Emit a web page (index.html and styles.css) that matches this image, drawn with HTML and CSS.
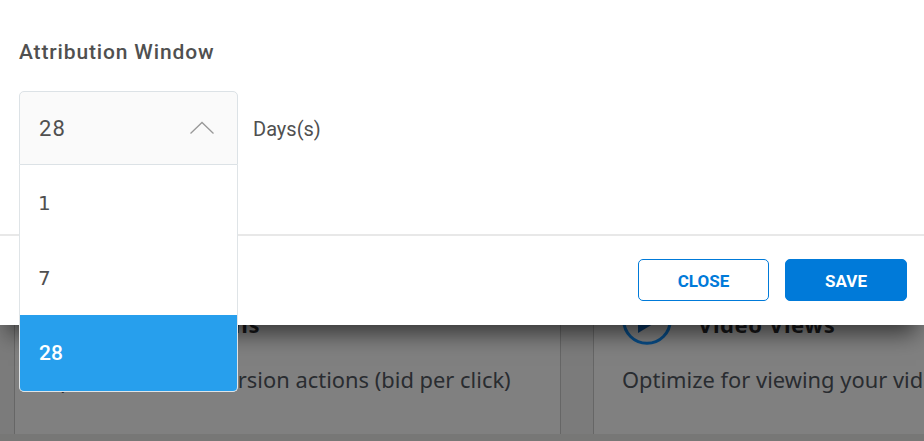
FILE: index.html
```
<!DOCTYPE html>
<html lang="en">
<head>
    <meta charset="UTF-8">
    <meta name="viewport" content="width=device-width, initial-scale=1.0">
    <title>Attribution Window</title>
    <link rel="stylesheet" href="styles.css">
</head>
<body>
    <main class="objectives">
        <div class="card">
            <div class="card-header">
                <svg class="card-icon" viewBox="0 0 50 50">
                    <circle cx="25" cy="25" r="23.3" />
                    <path d="M16 11v27l20-12z" />
                </svg>
                <h3>Conversions</h3>
            </div>
            <p>Optimize for conversion actions (bid per click)</p>
        </div>
        <div class="card card-last">
            <div class="card-header">
                <svg class="card-icon" viewBox="0 0 50 50">
                    <circle cx="25" cy="25" r="23.3" />
                    <path d="M16 11v27l20-12z" />
                </svg>
                <h3>Video Views</h3>
            </div>
            <p>Optimize for viewing your vid</p>
        </div>
    </main>

    <div class="modal">
        <div class="modal-body">
            <h2>Attribution Window</h2>
            <div class="field">
                <div class="select">
                    <div class="select-value">
                        <span>28</span>
                        <svg class="chevron" width="24" height="14" viewBox="0 0 24 14">
                            <path d="M0.5 12.5L12 1.5L23.5 12.5" />
                        </svg>
                    </div>
                    <ul class="select-menu">
                        <li>1</li>
                        <li>7</li>
                        <li class="selected">28</li>
                    </ul>
                </div>
                <span class="unit">Days(s)</span>
            </div>
        </div>
        <div class="modal-footer">
            <button class="btn btn-close">CLOSE</button>
            <button class="btn btn-save">SAVE</button>
        </div>
    </div>
</body>
</html>
```
FILE: styles.css
```
* {
    box-sizing: border-box;
}

body {
    margin: 0;
    height: 441px;
    overflow: hidden;
    position: relative;
    background-color: #777776;
    font-family: "Noto Sans", sans-serif;
    color: #505050;
}

h2, h3, p, ul {
    margin: 0;
    padding: 0;
}

/* page behind the modal */
.objectives {
    display: flex;
    gap: 32px;
    height: 434px;
    padding: 280px 0 0 14px;
    background-color: #7b7b7b;
}

.card {
    width: 547px;
    flex-shrink: 0;
    padding: 15px 0 0 28px;
    border: 1px solid #666;
    border-width: 0 1px;
    background-color: #808080;
}

.card-last {
    width: auto;
    flex: 1;
    border-right: 0;
}

.card-header {
    display: flex;
    align-items: center;
    gap: 26px;
    height: 50px;
}

.card-icon {
    width: 50px;
    height: 50px;
}

.card-icon circle {
    fill: none;
    stroke: #084c86;
    stroke-width: 3;
}

.card-icon path {
    fill: #0a3764;
}

.card h3 {
    padding-top: 7px;
    font-size: 22px;
    line-height: 30px;
    letter-spacing: 0.6px;
    color: #171719;
}

.card p {
    margin-top: 19px;
    font-size: 21.9px;
    line-height: 32px;
    white-space: nowrap;
    color: #292c30;
}

/* modal */
.modal {
    position: absolute;
    top: 0;
    left: 0;
    width: 924px;
    height: 325px;
    background-color: #fff;
    box-shadow: 0 16px 22px -8px rgba(0, 0, 0, 0.6);
}

.modal-body {
    height: 236px;
    padding: 37px 19px 0;
    border-bottom: 2px solid #e8e8e8;
}

.modal-body h2 {
    font-family: Roboto, sans-serif;
    font-size: 21px;
    font-weight: 500;
    line-height: 30px;
    letter-spacing: 0.85px;
}

.field {
    display: flex;
    align-items: center;
    gap: 15px;
    height: 74px;
    margin-top: 24px;
}

.select {
    position: relative;
    width: 219px;
    font-family: Roboto, sans-serif;
}

.select-value {
    display: flex;
    align-items: center;
    justify-content: space-between;
    height: 74px;
    padding: 0 23px 0 19px;
    border: 1px solid #dce2e6;
    border-radius: 5px 5px 0 0;
    background-color: #fafafa;
    font-size: 22px;
    letter-spacing: 1.2px;
}

.chevron path {
    fill: none;
    stroke: #999;
    stroke-width: 1.3;
}

.select-menu {
    position: absolute;
    top: 74px;
    left: 0;
    width: 219px;
    border: 1px solid #dfe4e7;
    border-top: 0;
    border-radius: 0 0 5px 5px;
    background-color: #fff;
    overflow: hidden;
    list-style: none;
    font-family: "DejaVu Sans", sans-serif;
    font-size: 20px;
}

.select-menu li {
    height: 75px;
    padding-left: 18px;
    line-height: 76px;
}

.select-menu .selected {
    height: 76px;
    padding-left: 19px;
    background-color: #279fed;
    font-family: Roboto, sans-serif;
    font-size: 21px;
    font-weight: 500;
    color: #fff;
}

.unit {
    padding-top: 1px;
    font-family: Roboto, sans-serif;
    font-size: 20px;
    line-height: 30px;
}

.modal-footer {
    display: flex;
    justify-content: flex-end;
    gap: 16px;
    padding: 23px 17px 0;
}

.btn {
    height: 42px;
    padding: 2px 0 0;
    border: 1px solid #007ad9;
    border-radius: 5px;
    font-family: Roboto, sans-serif;
    font-size: 17px;
    font-weight: 700;
}

.btn-close {
    width: 131px;
    background-color: #fff;
    color: #007ad9;
}

.btn-save {
    width: 122px;
    background-color: #007ad9;
    color: #fff;
}
```
